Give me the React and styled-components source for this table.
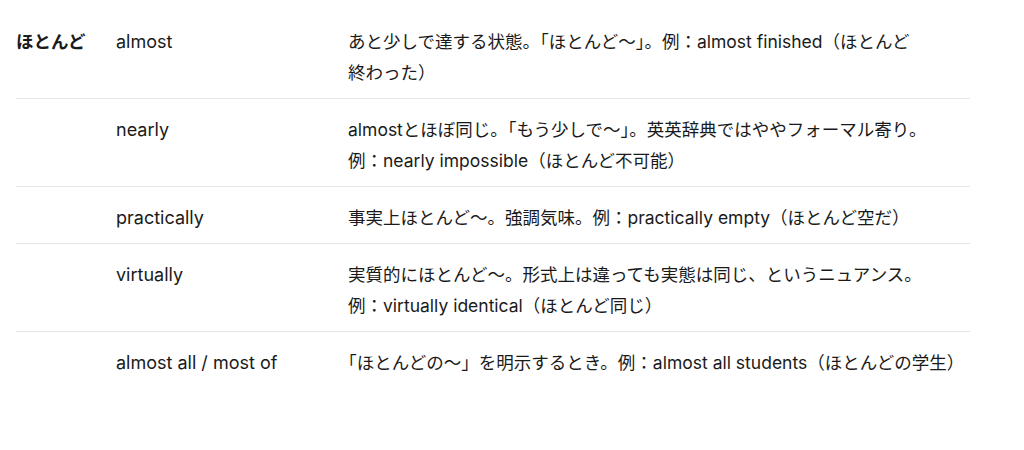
import React from "react";
import styled, { createGlobalStyle } from "styled-components";

const GlobalStyle = createGlobalStyle`
  html, body {
    margin: 0;
    padding: 0;
    background: #ffffff;
  }
  body {
    font-family: Inter, "Noto Sans CJK JP", sans-serif;
    color: #1a1a1a;
    -webkit-font-smoothing: antialiased;
  }
`;

const Table = styled.div`
  width: 954px;
  margin: 11px 16px 0;
  display: flex;
  flex-direction: column;
`;

const Row = styled.div`
  display: grid;
  grid-template-columns: 100px 232px 1fr;
  border-bottom: ${(p) => (p.$last ? "none" : "1px solid #e6e6e6")};
`;

const Cell = styled.div`
  padding: 15px 0 10px;
  font-size: 17.5px;
  line-height: 31px;
`;

const Term = styled(Cell)`
  font-weight: 700;
`;

const Word = styled(Cell)`
  font-size: 18px;
`;

const Desc = styled(Cell)`
  word-break: auto-phrase;
  text-spacing-trim: trim-start;
`;

const Example = styled.span`
  white-space: nowrap;
`;

const rows = [
  {
    term: "ほとんど",
    word: "almost",
    text: "あと少しで達する状態。「ほとんど〜」。",
    ex: "almost finished",
    gloss: "（ほとんど終わった）",
  },
  {
    word: "nearly",
    text: "almostとほぼ同じ。「もう少しで〜」。英英辞典ではややフォーマル寄り。",
    ex: "nearly impossible",
    gloss: "（ほとんど不可能）",
  },
  {
    word: "practically",
    text: "事実上ほとんど〜。強調気味。",
    ex: "practically empty",
    gloss: "（ほとんど空だ）",
  },
  {
    word: "virtually",
    text: "実質的にほとんど〜。形式上は違っても実態は同じ、というニュアンス。",
    ex: "virtually identical",
    gloss: "（ほとんど同じ）",
  },
  {
    word: "almost all / most of",
    text: "「ほとんどの〜」を明示するとき。",
    ex: "almost all students",
    gloss: "（ほとんどの学生）",
  },
];

export default function App() {
  return (
    <>
      <GlobalStyle />
      <Table lang="ja">
        {rows.map((r, i) => (
          <Row key={i} $last={i === rows.length - 1}>
            <Term>{r.term || ""}</Term>
            <Word>{r.word}</Word>
            <Desc>
              {r.text}
              <Example>例：{r.ex}</Example>
              {r.gloss}
            </Desc>
          </Row>
        ))}
      </Table>
    </>
  );
}
